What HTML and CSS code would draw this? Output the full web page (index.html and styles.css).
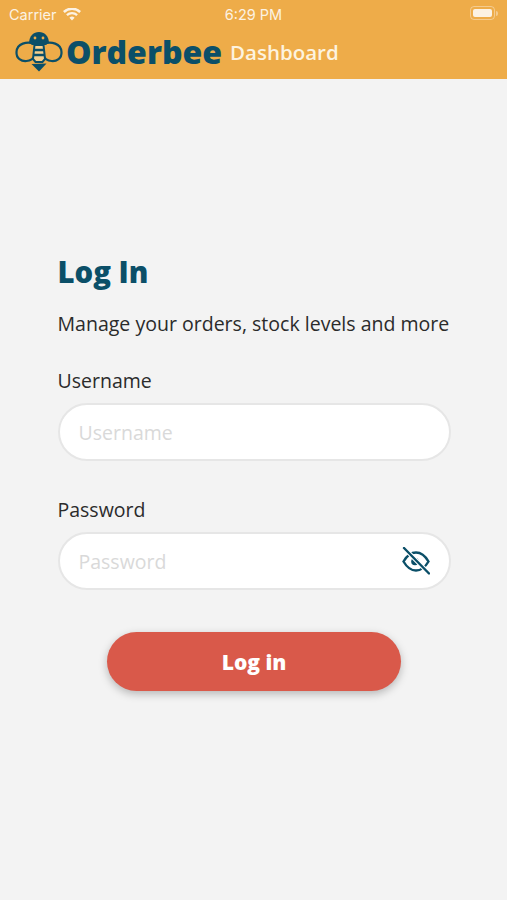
FILE: index.html
```html
<!DOCTYPE html>
<html lang="en">
<head>
    <meta charset="UTF-8">
    <meta name="viewport" content="width=device-width, initial-scale=1.0">
    <title>Orderbee Dashboard</title>
    <link rel="stylesheet" href="styles.css">
</head>
<body>
    <div class="header">
        <div class="status-bar">
            <div class="status-left">
                <span>Carrier</span>
                <svg class="wifi" viewBox="0 0 18 13" width="18" height="13">
                    <path d="M9 12.600 6.400 9.800a3.700 3.700 0 0 1 5.200 0z" fill="#fff"/>
                    <path d="M4.700 8.100 3.100 6.300a8.600 8.600 0 0 1 11.800 0l-1.600 1.800a6.200 6.200 0 0 0-8.600 0z" fill="#fff"/>
                    <path d="M1.700 4.900 0 3.100a13 13 0 0 1 18 0l-1.700 1.800a10.600 10.600 0 0 0-14.600 0z" fill="#fff"/>
                </svg>
            </div>
            <div class="status-time">6:29 PM</div>
            <div class="status-right">
                <div class="battery"><div class="battery-fill"></div></div>
                <div class="battery-nub"></div>
            </div>
        </div>
        <div class="brand">
            <svg class="bee" viewBox="0 0 48 41" width="48" height="41" fill="none" stroke="#0b4f68">
                <path d="M19 12.500C12 10.500 2 12 1.500 21c-.4 6.500 5 9.500 10 9 4-.4 7-2.500 8.500-5.500" stroke-width="2.200"/>
                <path d="M29 12.500c7-2 17-.5 17.500 8.500.4 6.500-5 9.500-10 9-4-.4-7-2.500-8.500-5.500" stroke-width="2.200"/>
                <path d="M24 1c-5.500 0-9.500 4-10 10.500l3 2.500h14l3-2.500C33.500 5 29.500 1 24 1z" fill="#0b4f68" stroke="none"/>
                <circle cx="20" cy="7" r="1.400" fill="#eeac49" stroke="none"/>
                <circle cx="28" cy="7" r="1.400" fill="#eeac49" stroke="none"/>
                <path d="M19.500 14h9l1.500 14-2.500 3h-7l-2.500-3z" fill="#f6d08e" stroke-width="2"/>
                <path d="M19 19h10M18.500 24h11" stroke-width="2.400"/>
                <path d="M16.500 33l15-.5-7.500 8z" fill="#0b4f68" stroke="none"/>
            </svg>
            <span class="brand-name">Orderbee</span>
            <span class="brand-sub">Dashboard</span>
        </div>
    </div>

    <div class="main-content">
        <h1>Log In</h1>
        <p class="intro">Manage your orders, stock levels and more</p>

        <div class="form-group">
            <label for="username">Username</label>
            <div class="input-box">
                <input type="text" id="username" placeholder="Username">
            </div>
        </div>

        <div class="form-group">
            <label for="password">Password</label>
            <div class="input-box">
                <input type="password" id="password" placeholder="Password">
                <svg class="eye" viewBox="0 0 28 28" width="28" height="28" fill="none" stroke="#0b4f68" stroke-width="2.400" stroke-linecap="round">
                    <path d="M1.500 14.500C5 8.500 9.500 5.500 14 5.500s9 3 12.500 9c-3.500 6-8 9-12.500 9s-9-3-12.500-9z"/>
                    <circle cx="13" cy="14.500" r="3.800" fill="#0b4f68" stroke="none"/>
                    <path d="M2.500 1.500 26.500 26" stroke="#fff" stroke-width="4.500"/>
                    <path d="M2 1 27 26.500"/>
                </svg>
            </div>
        </div>

        <button class="btn">Log in</button>
    </div>
</body>
</html>
```

FILE: styles.css
```css
* {
    margin: 0;
    padding: 0;
    box-sizing: border-box;
}

body {
    font-family: 'Open Sans', sans-serif;
    background: #f3f3f3;
    height: 900px;
    overflow: hidden;
    color: #2b2b2b;
}

.header {
    background: #eeac49;
    height: 79px;
    padding: 4px 9px 0;
}

.status-bar {
    display: flex;
    align-items: center;
    justify-content: space-between;
    height: 20px;
    color: #fff;
    font-family: Inter, sans-serif;
    font-size: 14.500px;
    opacity: 0.85;
}

.status-left {
    display: flex;
    align-items: center;
    gap: 6px;
    width: 90px;
}

.status-right {
    display: flex;
    align-items: center;
    justify-content: flex-end;
    gap: 1px;
    width: 90px;
    margin-bottom: 2px;
}

.battery {
    width: 25px;
    height: 14px;
    border: 1px solid rgba(255, 255, 255, 0.45);
    border-radius: 4px;
    padding: 2px;
}

.battery-fill {
    background: #fff;
    height: 100%;
    border-radius: 2px;
}

.battery-nub {
    width: 2px;
    height: 5px;
    background: rgba(255, 255, 255, 0.45);
    border-radius: 0 2px 2px 0;
}

.brand {
    display: flex;
    align-items: center;
    margin: 5px 0 0 6px;
    height: 44px;
}

.brand-name {
    margin-left: 3px;
    margin-top: 2px;
    font-size: 32px;
    font-weight: 800;
    color: #0b4f68;
    line-height: 1;
}

.brand-sub {
    margin-left: 8px;
    margin-top: 2px;
    font-size: 20.500px;
    font-weight: 600;
    color: #fdf3df;
    line-height: 1;
}

.main-content {
    padding: 173px 56.500px 0 57.500px;
}

h1 {
    font-size: 29.300px;
    font-weight: 800;
    color: #0b4f68;
    line-height: 40px;
}

.intro {
    margin-top: 18px;
    font-size: 19.550px;
    line-height: 28px;
    white-space: nowrap;
}

.form-group {
    margin-top: 29px;
}

.form-group + .form-group {
    margin-top: 35px;
}

label {
    display: block;
    font-size: 19.500px;
    line-height: 28px;
    margin-bottom: 8px;
}

.input-box {
    display: flex;
    align-items: center;
    height: 58px;
    background: #fff;
    border: 2px solid #e6e6e6;
    border-radius: 29px;
    padding: 0 18.500px 0 19px;
}

input {
    flex: 1;
    min-width: 0;
    border: none;
    outline: none;
    background: none;
    font-family: inherit;
    font-size: 19.500px;
}

input::placeholder {
    color: #d9d9d9;
    opacity: 1;
}

.btn {
    display: block;
    width: 294px;
    height: 59px;
    margin: 42px 0 0 49.500px;
    background: #d9594a;
    color: #fff;
    border: none;
    border-radius: 30px;
    font-family: inherit;
    font-size: 21px;
    font-weight: 800;
    box-shadow: 0 3px 8px rgba(0, 0, 0, 0.25);
}
```
